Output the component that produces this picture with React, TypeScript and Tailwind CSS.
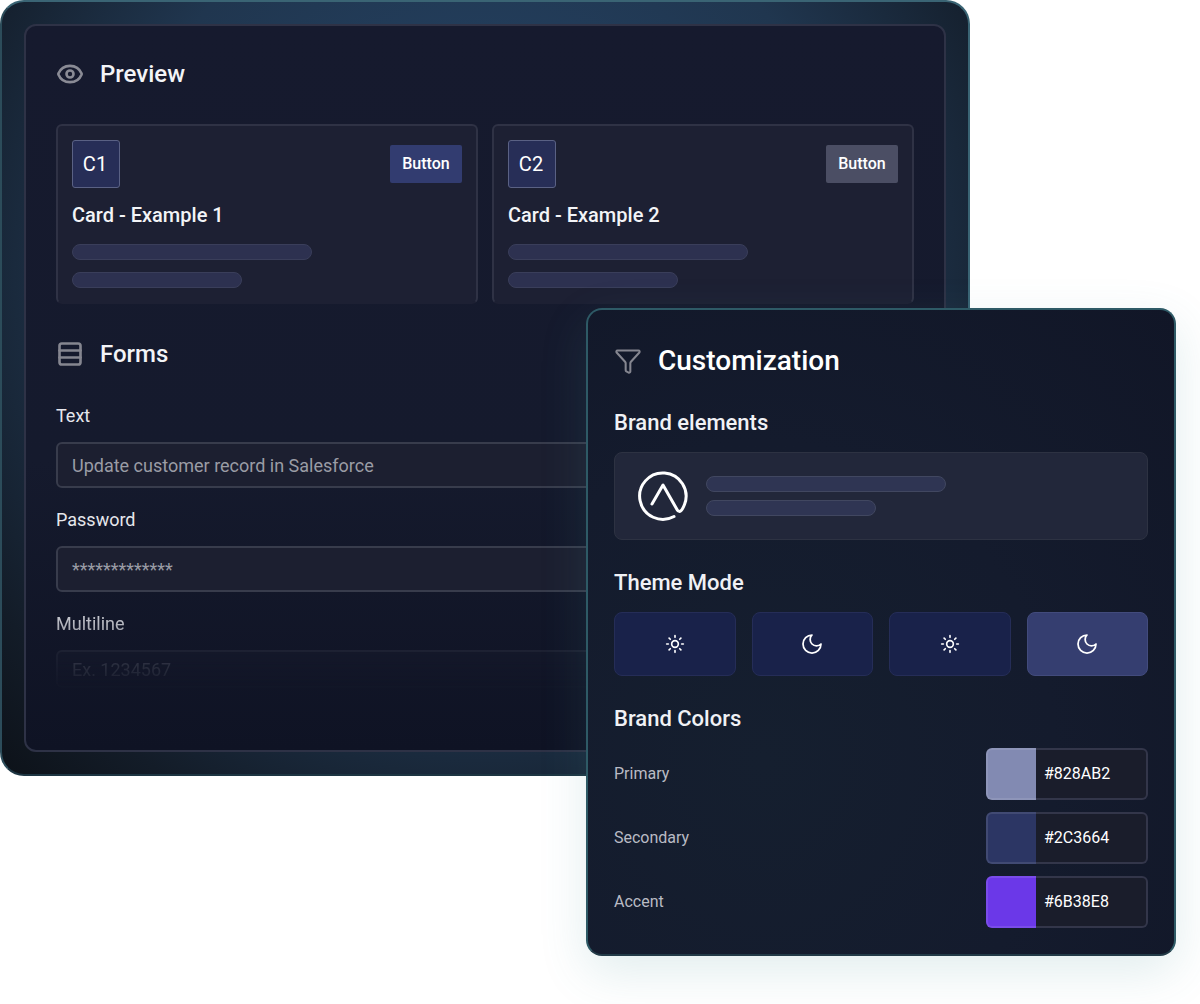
import { Eye, Funnel, Rows3, Sun } from 'lucide-react'

const colors = [
  { label: 'Primary', hex: '#828AB2', swatch: 'bg-[#828ab2]' },
  { label: 'Secondary', hex: '#2C3664', swatch: 'bg-[#2c3664]' },
  { label: 'Accent', hex: '#6B38E8', swatch: 'bg-[#6b38e8]' },
]

function Bar({ width }: { width: string }) {
  return <div className={`h-4 rounded-full border border-[#3a3e5a] bg-[#2d3150] ${width}`} />
}

function PreviewCard({ code, title, buttonClass }: { code: string; title: string; buttonClass: string }) {
  return (
    <div className="flex h-[180px] flex-col rounded-md border-2 border-[#2f3245] border-b-[#1d2033] bg-[#1d2033] px-3.5 pt-3.5">
      <div className="flex items-center justify-between">
        <div className="flex h-12 w-12 items-center justify-center rounded-[3px] border border-[#5a6184] bg-[#272e57] pr-[2px] text-[20px] text-white">
          {code}
        </div>
        <button type="button" className={`h-[38px] w-[72px] rounded-[2px] text-[16px] font-medium text-white ${buttonClass}`}>
          Button
        </button>
      </div>
      <div className="mt-[15px] text-[20px] leading-6 font-medium text-[#f3f4f7]">{title}</div>
      <div className="mt-[17px] flex flex-col gap-3">
        <Bar width="w-60" />
        <Bar width="w-[170px]" />
      </div>
    </div>
  )
}

function Field({ label, value, short }: { label: string; value: string; short?: boolean }) {
  return (
    <div>
      <div className="h-6 text-[18px] leading-6 text-[#e6e7ec]">{label}</div>
      <div
        className={`mt-3.5 flex items-center rounded-md border-2 border-[#383c4c] bg-[#1c1f30] px-3.5 text-[18px] text-[#9a9ca5] ${
          short ? 'h-[38px]' : 'h-[46px]'
        }`}
      >
        {value}
      </div>
    </div>
  )
}

function ThemeButton({ active, moon }: { active?: boolean; moon?: boolean }) {
  return (
    <div
      className={`flex h-16 items-center justify-center rounded-lg border ${
        active ? 'border-[#424b7c] bg-[#353e70]' : 'border-[#252d57] bg-[#19224a]'
      }`}
    >
      {moon ? (
        <svg width="24" height="24" viewBox="0 0 24 24" fill="none" stroke="#ffffff" strokeWidth="1.75" strokeLinecap="round" strokeLinejoin="round">
          <path d="M12 3a6 6 0 0 0 9 9 9 9 0 1 1-9-9Z" />
        </svg>
      ) : (
        <Sun size={20} color="#ffffff" strokeWidth={2} />
      )}
    </div>
  )
}

export default function App() {
  return (
    <div className="relative h-[1004px] w-[1200px] overflow-hidden bg-white font-['Roboto',sans-serif]">
      {/* Back window */}
      <div className="h-[776px] w-[970px] rounded-[24px] border-2 border-[#3a6474] border-b-[#1d3542] border-l-[#2c4c5a] bg-[radial-gradient(ellipse_at_50%_35%,#26466a_0%,#20364f_55%,#131c28_85%,#0d1219_100%)] p-[22px]">
        <div className="h-full overflow-hidden rounded-xl border-2 border-[#2e3246] bg-[linear-gradient(180deg,#161a2e_0%,#151a2d_60%,#0f1324_100%)] px-[30px] pt-[30px]">
          <div className="flex h-9 items-center gap-4">
            <Eye size={28} color="#8a8b95" strokeWidth={2.25} />
            <h2 className="text-[24px] font-medium text-[#f3f4f7]">Preview</h2>
          </div>
          <div className="mt-8 grid grid-cols-2 gap-3.5">
            <PreviewCard code="C1" title="Card - Example 1" buttonClass="bg-[#323c70]" />
            <PreviewCard code="C2" title="Card - Example 2" buttonClass="bg-[#4b4e64]" />
          </div>
          <div className="mt-8 flex h-9 items-center gap-4">
            <Rows3 size={28} color="#858690" strokeWidth={2.25} />
            <h2 className="text-[24px] font-medium text-[#f3f4f7]">Forms</h2>
          </div>
          <div className="mt-8 flex flex-col gap-5">
            <Field label="Text" value="Update customer record in Salesforce" />
            <Field label="Password" value="*************" />
            <div className="h-[76px] overflow-hidden [mask-image:linear-gradient(180deg,#000000e6_0%,#00000099_35%,#00000044_55%,#00000008_100%)]">
              <Field label="Multiline" value="Ex. 1234567" short />
            </div>
          </div>
        </div>
      </div>

      {/* Customization panel, sits over the back window */}
      <div className="absolute top-[308px] left-[586px] h-[648px] w-[590px] rounded-[16px] border-2 border-[#2e5a66] border-b-[#223a47] bg-[radial-gradient(ellipse_at_30%_70%,#151f2f_0%,#141b2d_50%,#111627_100%)] px-[26px] pt-[25px] shadow-[0_16px_48px_rgba(70,140,150,0.16)]">
        <div className="flex h-[52px] items-center gap-[16px]">
          <Funnel size={28} color="#858690" strokeWidth={1.75} />
          <h2 className="text-[28px] font-medium text-white">Customization</h2>
        </div>
        <h3 className="mt-5 h-8 text-[22px] leading-8 font-medium text-[#f0f1f5]">Brand elements</h3>
        <div className="mt-[13px] flex h-[88px] items-center gap-[17px] rounded-lg border border-[#2d3242] bg-[#22273a] pl-[22px]">
          <svg width="52" height="52" viewBox="0 0 52 52" fill="none" stroke="#ffffff" strokeWidth="3" strokeLinecap="round" strokeLinejoin="round">
            <path d="M37 46.5A23.2 23.2 0 1 1 47.5 34.5Q45 41 42.5 41.5Q41 41.5 40 39.5L26 15L15 34" />
          </svg>
          <div className="flex flex-col gap-2">
            <div className="h-4 w-60 rounded-full border border-[#414760] bg-[#2f3553]" />
            <div className="h-4 w-[170px] rounded-full border border-[#414760] bg-[#2f3553]" />
          </div>
        </div>
        <h3 className="mt-[27px] h-8 text-[22px] leading-8 font-medium text-[#f0f1f5]">Theme Mode</h3>
        <div className="mt-[13px] grid grid-cols-4 gap-4">
          <ThemeButton />
          <ThemeButton moon />
          <ThemeButton />
          <ThemeButton moon active />
        </div>
        <h3 className="mt-[27px] h-8 text-[22px] leading-8 font-medium text-[#f0f1f5]">Brand Colors</h3>
        <div className="mt-[13px] flex flex-col gap-3">
          {colors.map((c) => (
            <div key={c.label} className="flex items-center justify-between">
              <span className="text-[16px] text-[#b9bbc4]">{c.label}</span>
              <div className="flex h-[52px] w-[162px]">
                <div className={`w-[50px] rounded-l-md border-2 border-r-0 border-white/10 ${c.swatch}`} />
                <div className="flex flex-1 items-center rounded-r-md border-2 border-l-0 border-[#33364a] bg-[#1a1d2b] pl-2 text-[16px] text-white">
                  {c.hex}
                </div>
              </div>
            </div>
          ))}
        </div>
      </div>
    </div>
  )
}
